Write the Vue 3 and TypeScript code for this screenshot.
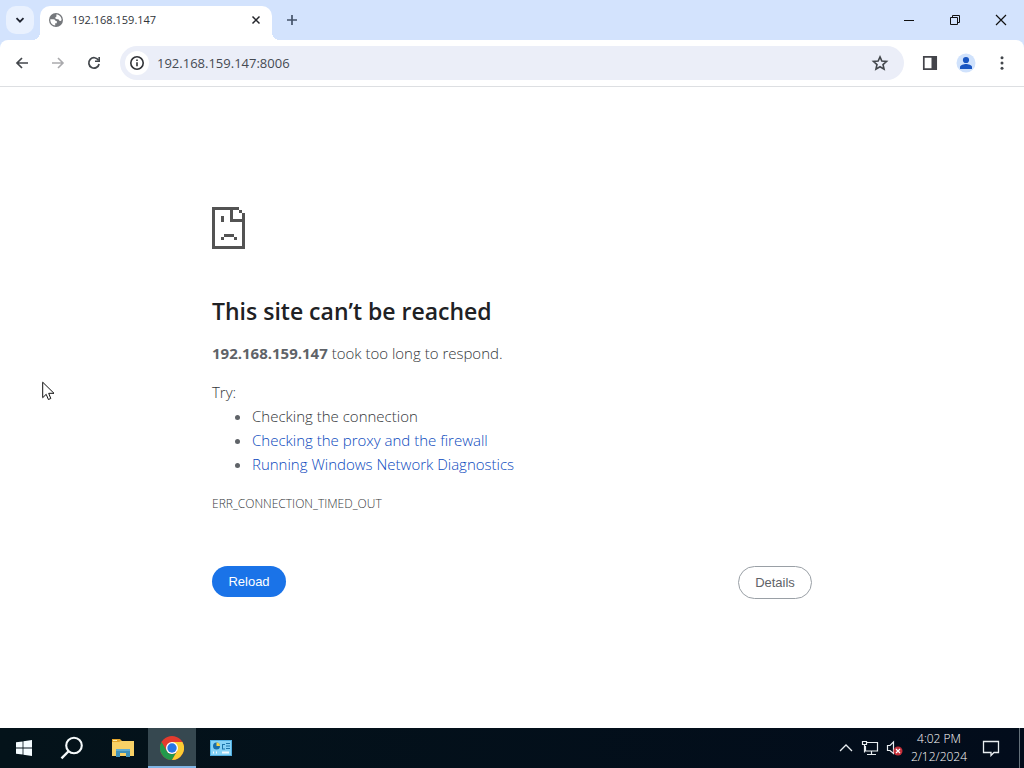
<script setup lang="ts">
import { ref } from 'vue'

const host = '192.168.159.147'
const address = ref(`${host}:8006`)
const suggestions: { text: string; link: boolean }[] = [
  { text: 'Checking the connection', link: false },
  { text: 'Checking the proxy and the firewall', link: true },
  { text: 'Running Windows Network Diagnostics', link: true },
]
</script>

<template>
  <div class="desktop">
    <div class="frame">
      <header class="tabstrip">
        <button class="tab-search" aria-label="Search tabs">
          <svg width="16" height="16" viewBox="0 0 16 16"><path d="M4.5 6.2 8 9.7l3.5-3.5" fill="none" stroke="#1f2430" stroke-width="1.8" /></svg>
        </button>
        <div class="tab">
          <svg class="favicon" width="16" height="16" viewBox="0 0 16 16">
            <circle cx="8" cy="8" r="7" fill="#75787c" />
            <path d="M2.300 7.300h3.200c1.200 0 2 .7 2 1.800h1.300v2.200H7.200v2.300C4.500 13.300 2.200 11.200 2.300 7.300z" fill="#fff" />
            <path d="M8.300 2.400c3.200 0 5.300 2.600 5.300 5.700-.4.900-1.200 1.200-2 .7-.8-.4-.6-1.300-1.400-1.500-1.100-.2-2.500.1-2.900-1-.4-1 .6-1.300 1.100-1.900.5-.6-.4-1.100-.1-2z" fill="#fff" />
          </svg>
          <span class="tab-title">{{ host }}</span>
          <button class="tab-close" aria-label="Close tab">
            <svg width="16" height="16" viewBox="0 0 16 16"><path d="m4.500 4.500 7 7m0-7-7 7" stroke="#24262b" stroke-width="1.500" /></svg>
          </button>
        </div>
        <button class="new-tab" aria-label="New tab">
          <svg width="16" height="16" viewBox="0 0 16 16"><path d="M8 3v10M3 8h10" stroke="#44536a" stroke-width="1.700" /></svg>
        </button>
        <div class="window-controls">
          <button aria-label="Minimize"><svg width="12" height="12" viewBox="0 0 12 12"><path d="M1 6.500h10" stroke="#111" /></svg></button>
          <button aria-label="Restore"><svg width="12" height="12" viewBox="0 0 12 12"><path d="M1.500 3.500h7v7h-7zM3.500 3.500v-2h7v7h-2" fill="none" stroke="#111" /></svg></button>
          <button aria-label="Close"><svg width="12" height="12" viewBox="0 0 12 12"><path d="m1 1 10 10M11 1 1 11" stroke="#111" stroke-width="1.200" /></svg></button>
        </div>
      </header>

      <nav class="toolbar">
        <button aria-label="Back"><svg width="20" height="20" viewBox="0 0 20 20"><path d="M16 10H5M10 5l-5 5 5 5" fill="none" stroke="#43474c" stroke-width="1.700" /></svg></button>
        <button aria-label="Forward" disabled><svg width="20" height="20" viewBox="0 0 20 20"><path d="M4 10h11M10 5l5 5-5 5" fill="none" stroke="#aaaaad" stroke-width="1.600" /></svg></button>
        <button aria-label="Reload page"><svg width="20" height="20" viewBox="0 0 20 20"><path d="M14.500 7.300A5.200 5.200 0 1 0 15.100 11" fill="none" stroke="#43474c" stroke-width="1.700" /><path d="M16 4v5h-5V7.400h3.400V4z" fill="#43474c" /></svg></button>
        <div class="omnibox">
          <button class="site-info" aria-label="View site information">
            <svg width="16" height="16" viewBox="0 0 16 16"><circle cx="8" cy="8" r="6.200" fill="none" stroke="#303236" stroke-width="1.600" /><path d="M8 7.200v4M8 4.400v1.700" stroke="#303236" stroke-width="1.600" /></svg>
          </button>
          <input v-model="address" aria-label="Address and search bar" type="text" />
          <button class="bookmark" aria-label="Bookmark this tab">
            <svg width="20" height="20" viewBox="0 0 20 20"><path d="m10 3.900 1.850 4.200 4.650.4-3.500 3.050 1.050 4.550L10 13.700l-4.050 2.400L7 11.550 3.500 8.500l4.650-.4z" fill="none" stroke="#43474c" stroke-width="1.600" /></svg>
          </button>
        </div>
        <button aria-label="Side panel"><svg width="20" height="20" viewBox="0 0 20 20"><path d="M3.800 3.800h12.400v12.400H3.800z" fill="none" stroke="#43444a" stroke-width="1.700" /><path d="M11.500 4H16v12h-4.500z" fill="#43444a" /></svg></button>
        <button aria-label="Profile"><svg width="20" height="20" viewBox="0 0 20 20"><circle cx="10" cy="10" r="9.500" fill="#d0e2fc" /><circle cx="10" cy="7" r="3.100" fill="#1a56c2" /><path d="M4 16v-2c0-2.100 4-3.100 6-3.100s6 1 6 3.100v2z" fill="#1a56c2" /></svg></button>
        <button aria-label="Menu"><svg width="20" height="20" viewBox="0 0 20 20" fill="#43474c"><circle cx="10" cy="4.800" r="1.500" /><circle cx="10" cy="10" r="1.500" /><circle cx="10" cy="15.200" r="1.500" /></svg></button>
      </nav>
    </div>

    <main class="page">
      <article class="error">
        <svg class="sad-page" width="33" height="42" viewBox="0 0 33 42" fill="#535353" shape-rendering="crispEdges" aria-hidden="true">
          <path d="M0 0h27v3H3v36h27V6h3v36H0z" />
          <path d="M27 3h3v3h-3zM18 3h3v9h9v3H18zM9 9h3v6H9zM12 27h10v3H12zM9 30h3v3H9zM22 30h3v3h-3z" />
        </svg>
        <h1>This site can’t be reached</h1>
        <p class="summary"><strong>{{ host }}</strong> took too long to respond.</p>
        <p class="try">Try:</p>
        <ul>
          <li v-for="s in suggestions" :key="s.text">
            <a v-if="s.link" href="#">{{ s.text }}</a>
            <template v-else>{{ s.text }}</template>
          </li>
        </ul>
        <p class="code">ERR_CONNECTION_TIMED_OUT</p>
        <div class="actions">
          <button class="reload">Reload</button>
          <button class="details">Details</button>
        </div>
      </article>
    </main>

    <footer class="taskbar">
      <button class="task" aria-label="Start"><svg width="16" height="16" viewBox="0 0 16 16" fill="#f5fcff"><path d="M0 2.300 6.600 1.400v6.200H0zM7.400 1.300 16 0v7.600H7.400zM0 8.400h6.600v6.200L0 13.700zM7.400 8.400H16V16l-8.600-1.300z" /></svg></button>
      <button class="task" aria-label="Search"><svg width="24" height="24" viewBox="0 0 24 24"><circle cx="14" cy="9.500" r="7.800" fill="none" stroke="#f5f9fa" stroke-width="2.100" /><path d="m8.300 15.500-6.800 6.800" stroke="#f5f9fa" stroke-width="2.400" /></svg></button>
      <div class="pinned">
        <button class="task" aria-label="File Explorer">
          <svg width="22" height="20" viewBox="0 0 22 20"><path d="M0 1h8l2 2h11v3H0z" fill="#e3a62c" /><path d="M0 4h7l2-1h13v15H0z" fill="#f8d166" /><path d="M1 2h4v1H1z" fill="#fff0b0" /><path d="M4 11h14v8h-4v-4H8v4H4z" fill="#3f91b9" /><path d="M4 11h14v2H4z" fill="#60acd0" /></svg>
        </button>
        <button class="task active" aria-label="Google Chrome">
          <svg width="24" height="24" viewBox="0 0 24 24"><circle cx="12" cy="12" r="12" fill="#e33b2e" /><path d="M1.600 6 6.800 15A6 6 0 0 0 17.200 15L12 24A12 12 0 0 1 1.600 6z" fill="#23994b" /><path d="M12 6h10.400A12 12 0 0 1 12 24l5.200-9z" fill="#fccd33" /><circle cx="12" cy="12" r="6" fill="#fff" /><circle cx="12" cy="12" r="4.700" fill="#2776e6" /></svg>
        </button>
        <button class="task" aria-label="Control Panel">
          <svg width="22" height="16" viewBox="0 0 22 16"><path d="M0 0h22v16H0z" fill="#4faddf" /><path d="M1 1h20v14H1z" fill="#86d3f7" /><circle cx="6.500" cy="6" r="3.500" fill="#176eab" /><path d="M6.500 6V2.500A3.500 3.500 0 0 1 10 6z" fill="#f7d34b" /><path d="M12 4.500h3M12 9h3M16 3.500h4M16 6h4M16 8.500h4M12.500 4v5" fill="none" stroke="#1c75aa" /><path d="M3 12.500h1m2 0h1m5 0h7" stroke="#f1fbff" stroke-width="2" /></svg>
        </button>
      </div>
      <div class="tray">
        <button class="tray-icon" aria-label="Show hidden icons"><svg width="14" height="10" viewBox="0 0 14 10"><path d="m1 8 6-6 6 6" fill="none" stroke="#e8edf0" stroke-width="1.300" /></svg></button>
        <button class="tray-icon" aria-label="Network"><svg width="18" height="16" viewBox="0 0 18 16"><path d="M5 2.500h11.500v8.500H4.500V6M10.500 11v3M6 14.500h9M1.500 1.500h4v3h-4zM3.500 4.500v8" fill="none" stroke="#e8edf0" stroke-width="1.200" /></svg></button>
        <button class="tray-icon" aria-label="Volume muted"><svg width="18" height="16" viewBox="0 0 18 16"><path d="M2.500 5.500h2.500l3.500-3.500v11.500L5 10.500H2.500z" fill="none" stroke="#e8edf0" stroke-width="1.200" /><circle cx="13" cy="11" r="4.500" fill="#c5303a" /><path d="m11 9 4 4m0-4-4 4" stroke="#fff" stroke-width="1.200" /></svg></button>
        <time class="clock" datetime="2024-02-12T16:02"><span>4:02 PM</span><span>2/12/2024</span></time>
        <button class="notify" aria-label="Notifications"><svg width="18" height="18" viewBox="0 0 18 18"><path d="M1.500 2.500h15v11h-4.500L9 16.500v-3H1.500z" fill="none" stroke="#e8edf0" stroke-width="1.300" /></svg></button>
        <button class="show-desktop" aria-label="Show desktop"></button>
      </div>
    </footer>

    <svg class="pointer" width="13" height="20" viewBox="0 0 13 20" aria-hidden="true"><path d="M.7 1.200v15.500l3.500-3.400 2.200 5.200 2.400-1L6.700 12.300H12z" fill="#fff" stroke="#111" stroke-width="1" /></svg>
  </div>
</template>

<style>
html, body { margin: 0; }
</style>

<style scoped>
.desktop {
  position: relative;
  display: flex;
  flex-direction: column;
  min-height: 100vh;
  background: #fff;
  font-family: "Open Sans", "Noto Sans", sans-serif;
}
button {
  display: flex;
  align-items: center;
  justify-content: center;
  padding: 0;
  border: 0;
  background: none;
}
svg { display: block; flex: none; }
.frame {
  background: linear-gradient(#d3e3fd 60px, #fff 60px);
  border-bottom: 1px solid #dddfe2;
}
.tabstrip {
  display: flex;
  height: 40px;
  padding-left: 6px;
}
.tab-search {
  width: 28px;
  height: 28px;
  margin-top: 6px;
  border-radius: 10px;
  background: #e9f1fe;
}
.tab {
  position: relative;
  display: flex;
  flex: 0 1 232px;
  align-items: center;
  box-sizing: border-box;
  height: 34px;
  margin: 6px 0 0 6px;
  padding: 0 8px 6px;
  border-radius: 10px 10px 0 0;
  background: #fff;
}
.tab::before,
.tab::after {
  content: "";
  position: absolute;
  bottom: 0;
  width: 8px;
  height: 8px;
}
.tab::before { left: -8px; background: radial-gradient(circle at 0 0, transparent 8px, #fff 8px); }
.tab::after { right: -8px; background: radial-gradient(circle at 100% 0, transparent 8px, #fff 8px); }
.tab-title { flex: 1; margin-left: 8px; font-size: 11px; line-height: 16px; color: #30343a; }
.new-tab { width: 28px; height: 28px; margin: 6px 0 0 6px; }
.window-controls { display: flex; margin-left: auto; }
.window-controls button { width: 46px; height: 40px; }
.toolbar {
  display: flex;
  align-items: center;
  gap: 8px;
  height: 46px;
  padding: 0 8px;
  border-radius: 8px 8px 0 0;
  background: #fff;
}
.toolbar > button { width: 28px; height: 28px; }
.omnibox {
  display: flex;
  flex: 1;
  align-items: center;
  box-sizing: border-box;
  height: 34px;
  margin: 0 4px;
  padding: 0 10px 0 5px;
  border-radius: 17px;
  background: #ebeef8;
}
.site-info { width: 24px; height: 24px; border-radius: 12px; background: #fff; }
.omnibox input {
  flex: 1;
  min-width: 0;
  margin: 0 8px;
  padding: 0;
  border: 0;
  outline: 0;
  background: none;
  font: 13px/20px "Open Sans", "Noto Sans", sans-serif;
  color: #454a52;
}
.bookmark { width: 28px; height: 28px; }
.page { flex: 1; }
.error {
  box-sizing: border-box;
  max-width: 600px;
  margin: 0 auto;
  padding: 120px 0 40px;
  font-size: 15px;
  font-weight: 300;
  line-height: 24px;
  color: #34373b;
}
h1 { margin: 48px 0 15px; font-size: 23px; font-weight: 600; line-height: 29px; color: #202124; }
p { margin: 0; }
strong { font-weight: 700; color: #5f6368; }
.try { margin-top: 15px; }
ul { margin: 0; padding-left: 40px; }
li::marker { color: #5f6368; }
a { color: #0b49bd; text-decoration: none; }
.code { margin-top: 16px; font-size: 12px; }
.actions { display: flex; align-items: flex-start; justify-content: space-between; margin-top: 50px; }
.actions button {
  min-width: 74px;
  padding: 8px 16px;
  border-radius: 20px;
  font: 13px/15px "Liberation Sans", Arial, sans-serif;
}
.actions .reload { background: #1a73e8; color: #fff; }
.actions .details { border: 1px solid #9aa0a6; color: #5f6368; }
.taskbar { display: flex; height: 40px; background: linear-gradient(90deg, #04131a, #020c1b); }
.task { box-sizing: border-box; width: 48px; height: 40px; }
.pinned { display: flex; gap: 1px; margin-left: 3px; }
.task.active { border-top: 2px solid #364850; border-bottom: 2px solid #80b5e5; background: #364850; }
.tray { display: flex; align-items: stretch; margin-left: auto; color: #fff; }
.tray-icon { width: 24px; }
.clock {
  display: flex;
  flex-direction: column;
  justify-content: center;
  width: 66px;
  font-size: 12px;
  font-weight: 300;
  line-height: 18px;
  text-align: center;
}
.notify { width: 38px; }
.show-desktop { width: 5px; margin-left: 9px; border-left: 1px solid #65717a; }
.pointer { position: absolute; left: 42px; top: 381px; }
</style>
